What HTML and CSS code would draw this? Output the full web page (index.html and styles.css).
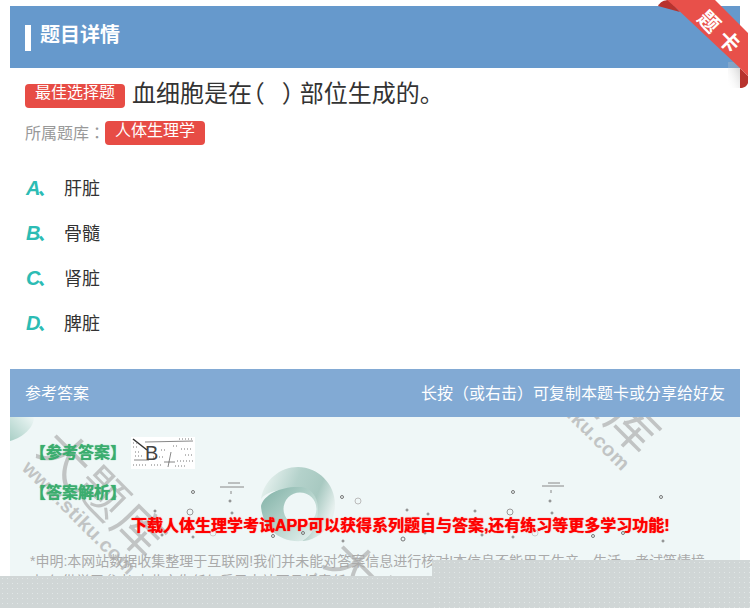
FILE: index.html
```html
<!DOCTYPE html>
<html lang="zh">
<head>
<meta charset="utf-8">
<title>题目详情</title>
<link rel="stylesheet" href="styles.css">
</head>
<body>
<div class="page">
  <header class="detail-head"><span class="bar"></span><h1>题目详情</h1></header>
  <section class="question">
    <div class="q-line"><span class="tag tag-type">最佳选择题</span><span class="q-text">血细胞是在<span class="paren">（ ）</span>部位生成的。</span></div>
    <div class="bank-line"><span class="bank-label">所属题库<span class="colon" lang="zh-TW">：</span></span><span class="tag">人体生理学</span></div>
  </section>
  <ul class="options">
    <li><b class="letter">A<i>、</i></b><span>肝脏</span></li>
    <li><b class="letter">B<i>、</i></b><span>骨髓</span></li>
    <li><b class="letter">C<i>、</i></b><span>肾脏</span></li>
    <li><b class="letter">D<i>、</i></b><span>脾脏</span></li>
  </ul>
  <div class="answer-head"><span>参考答案</span><span>长按（或右击）可复制本题卡或分享给好友</span></div>
  <section class="answer">
    <svg class="corner" viewBox="0 0 26 26"><defs><linearGradient id="cg" x1="0" y1="1" x2="1" y2="0"><stop offset="0" stop-color="#a9cfc6"/><stop offset="1" stop-color="#eef7f6"/></linearGradient></defs><path d="M0 0H24C24 10 14 20 0 24Z" fill="url(#cg)"/></svg>
    <svg class="swirl" viewBox="0 0 76 76">
      <defs>
        <linearGradient id="s1" x1="0" y1="0.1" x2="1" y2="0.5"><stop offset="0" stop-color="#eef6f4"/><stop offset="0.45" stop-color="#b4d2cb"/><stop offset="0.75" stop-color="#a8c9c1"/><stop offset="1" stop-color="#e6f0ee"/></linearGradient>
        <linearGradient id="s2" x1="0" y1="0" x2="1" y2="1"><stop offset="0" stop-color="#7fb0a5"/><stop offset="0.55" stop-color="#b9d6cf"/><stop offset="1" stop-color="#eaf4f2"/></linearGradient>
      </defs>
      <path d="M1 33C4 14 20 1 38 1C58 1 75 18 75 38C75 52 68 65 56 71C50 74 46 75 42 75C50 70 57 58 57 43C57 34 50 26 40 26C24 22 8 24 1 33Z" fill="url(#s1)"/>
      <path d="M40 21C50 21 58 30 58 43C58 58 52 70 42 75C18 77 2 60 1 40C4 28 22 20 40 21ZM40 26.500A16.500 16.500 0 1 0 40 59.500A16.500 16.500 0 1 0 40 26.500Z" fill="url(#s2)" fill-rule="evenodd"/>
    </svg>
    <svg class="specks" viewBox="0 0 730 190" fill="none" stroke="#777" stroke-width="1">
      <path d="M210 70h24M218 66h12M221 74v3M532 69h22M538 66h12M541 73v3" stroke="#888"/>
      <circle cx="183" cy="75" r="1.500"/><circle cx="220" cy="84" r="1"/><circle cx="332" cy="80" r="1.500"/><circle cx="348" cy="84" r="3" stroke="#bbb"/><circle cx="145" cy="94" r="1"/><circle cx="180" cy="95" r="3" stroke="#999"/><circle cx="222" cy="96" r="1"/><circle cx="152" cy="118" r="1"/><circle cx="183" cy="120" r="1"/><circle cx="203" cy="116" r="3" stroke="#ccc"/><circle cx="263" cy="119" r="1.500"/><circle cx="293" cy="116" r="1.500"/><circle cx="333" cy="124" r="1"/>
      <circle cx="503" cy="75" r="1.500"/><circle cx="540" cy="84" r="1"/><circle cx="651" cy="80" r="1.500"/><circle cx="397" cy="93" r="1"/><circle cx="418" cy="97" r="1"/><circle cx="465" cy="94" r="1"/><circle cx="500" cy="95" r="3" stroke="#999"/><circle cx="542" cy="96" r="1"/><circle cx="393" cy="122" r="2"/><circle cx="415" cy="116" r="1"/><circle cx="472" cy="118" r="1"/><circle cx="503" cy="120" r="1"/><circle cx="525" cy="116" r="3" stroke="#ccc"/><circle cx="583" cy="119" r="1.500"/><circle cx="613" cy="116" r="1.500"/><circle cx="653" cy="124" r="1"/>
    </svg>
    <div class="mark mark-a"><b>大题库</b><span>www.stiku.com</span></div>
    <div class="mark mark-b"><b>大题库</b><span>www.stiku.com</span></div>
    <div class="mark mark-c"><b>大题库</b><span>www.stiku.com</span></div>
    <div class="ans-row"><span class="green ans-title">【参考答案】</span>
      <span class="ans-box"><svg class="noise" viewBox="0 0 64 32" fill="none" stroke="#555" stroke-width="0.7"><path d="M2 2L16 13" stroke="#333" stroke-width="1.500"/><path d="M14 5L62 4M3 23H18M33 25H44M40 15L37 30" /><path d="M2 10h6M48 2h14M50 12h12M2 28h14M20 28h10M46 24h16M54 18h7M4 15h6M22 20h10M42 9h6M4 19h8M44 29h10M30 13h4M2 6h5" stroke="#777" stroke-width="1" stroke-dasharray="1 2"/></svg><em>B</em></span>
    </div>
    <div class="green ana">【答案解析】</div>
    <p class="promo">下载人体生理学考试APP可以获得系列题目与答案,还有练习等更多学习功能!</p>
    <p class="note">*申明:本网站数据收集整理于互联网!我们并未能对答案信息进行核对!本信息不能用于生产、生活、考试等情境中,仅供学习参考!由此产生任何后果本站不承担责任!</p>
  </section>
  <svg class="ribbon" viewBox="0 0 100 100">
    <defs><linearGradient id="shade" x1="1" y1="0" x2="0" y2="1"><stop offset="0" stop-color="#999" stop-opacity="0.5"/><stop offset="1" stop-color="#fff" stop-opacity="0"/></linearGradient></defs>
    <path d="M8 6C10 2 14 0 19 0L30 12Z" fill="#b8332e"/>
    <path d="M78 62H90V88H78Z" fill="url(#shade)"/>
    <path d="M90 68L98 76V83C97 86 94 88 90 88Z" fill="#b8332e"/>
    <path d="M17 0H65L98 33V76L90 68L24 6Z" fill="#e8504a"/>
  </svg>
  <span class="rib-text rib-1">题</span><span class="rib-text rib-2">卡</span>
  <div class="shade shade-l"></div>
  <div class="shade shade-r"></div>
</div>
</body>
</html>
```
FILE: styles.css
```css
* { box-sizing: border-box; }
html, body { margin: 0; padding: 0; background: #fff; }
body { font-family: "Liberation Sans", "Noto Sans CJK SC", sans-serif; color: #333; }
.page { position: relative; width: 750px; height: 608px; overflow: hidden; padding: 6px 10px 0; }

.detail-head { display: flex; align-items: center; height: 62px; padding-left: 15px; gap: 9px; background: #6699cc; }
.bar { width: 6px; height: 26px; background: #fff; margin-top: 2px; }
.detail-head h1 { margin: 0 0 5px; font-size: 20px; line-height: 26px; font-weight: 700; color: #fff; }

.question { padding: 11px 15px 0; }
.q-line { display: flex; align-items: center; height: 30px; gap: 7px; }
.tag { display: inline-block; width: 100px; height: 24px; border-radius: 4px; background: #e74c45; color: #fff; font-size: 16px; line-height: 20px; text-align: center; }
.tag-type { margin-top: 3px; line-height: 18px; }
.q-text { font-size: 24px; line-height: 30px; color: #333; white-space: nowrap; }
.paren { padding: 0 5px 0 0; font-feature-settings: "palt"; word-spacing: 12px; }
.bank-line { display: flex; align-items: flex-start; height: 24px; margin-top: 12px; }
.bank-label { flex: none; width: 80px; font-size: 16px; line-height: 22px; color: #999; white-space: nowrap; overflow: hidden; }
.colon { font-family: "Noto Sans CJK TC", sans-serif; }

.options { list-style: none; margin: 19px 0 0; padding: 0 16px; }
.options li { display: flex; align-items: center; height: 45px; font-size: 18px; color: #333; }
.letter { width: 38px; font-size: 20px; font-style: italic; color: #2cbcb4; white-space: nowrap; letter-spacing: -3px; }
.letter i { font-size: 18px; letter-spacing: 0; }

.answer-head { display: flex; justify-content: space-between; align-items: center; height: 48px; margin-top: 25px; padding: 0 15px 3px; background: #82aad4; color: #fff; font-size: 16px; }

.answer { position: relative; height: 190px; overflow: hidden; background: #eff7f7; padding: 20px 20px 0; }
.corner { position: absolute; left: 0; top: 0; width: 26px; height: 26px; }
.swirl { position: absolute; left: 250px; top: 49px; width: 76px; height: 76px; }
.specks { position: absolute; left: 0; top: 0; width: 730px; height: 190px; }

.mark { position: absolute; display: flex; flex-direction: column; align-items: center; color: #aaa; opacity: 0.65; transform: translate(-50%, -50%) rotate(45deg); white-space: nowrap; }
.mark b { font-size: 50px; font-weight: 400; line-height: 44px; letter-spacing: 2px; }
.mark span { font-size: 20px; font-weight: 700; line-height: 20px; letter-spacing: 0.5px; }
.mark-a { left: 85px; top: 85px; }
.mark-b { left: 579px; top: -19px; }
.mark-c { left: 372px; top: 196px; }

.ans-row { position: relative; display: flex; align-items: center; height: 32px; gap: 5px; }
.green { font-size: 16px; font-weight: 700; color: #3aad6e; text-shadow: 0 0 1px #3aad6e; }
.ans-title { margin-top: -5px; }
.ans-box { position: relative; display: flex; align-items: center; width: 64px; height: 32px; padding-left: 14px; background: #fff; }
.noise { position: absolute; left: 0; top: 0; width: 64px; height: 32px; }
.ans-box em { position: relative; font-style: normal; font-size: 20px; color: #444; }
.ana { position: relative; margin-top: 12px; line-height: 24px; }
.promo { position: relative; margin: 9px 0 0 101px; font-size: 16px; line-height: 24px; font-weight: 700; color: #f00; white-space: nowrap; text-shadow: 0 0 1px #f00; }
.note { position: relative; margin: 13px 0 0; font-size: 14px; line-height: 20px; color: #aaa; }

.ribbon { position: absolute; right: 0; top: 0; width: 100px; height: 100px; }
.rib-text { position: absolute; color: #fff; font-size: 21px; font-weight: 700; line-height: 24px; transform: rotate(45deg); }
.rib-1 { left: 698px; top: 10px; }
.rib-2 { left: 718px; top: 30px; }

.shade { position: absolute; bottom: 0; background-color: #d0d6d6; background-image: radial-gradient(circle, #e2e7e7 0.6px, transparent 1px); background-size: 5px 5px; }
.shade-l { left: 0; width: 432px; height: 32px; }
.shade-r { left: 432px; width: 318px; height: 48px; }
```
